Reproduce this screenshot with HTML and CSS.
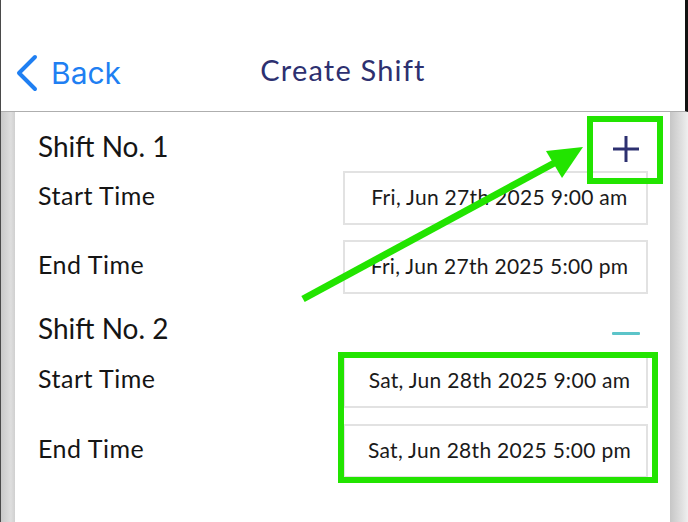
FILE: index.html
```html
<!DOCTYPE html>
<html lang="en">
<head>
    <meta charset="UTF-8">
    <meta name="viewport" content="width=device-width, initial-scale=1.0">
    <title>Create Shift</title>
    <link rel="stylesheet" href="styles.css">
</head>
<body>
    <div class="screen">
        <header class="topbar">
            <a class="back" href="#">
                <svg width="24" height="38" viewBox="0 0 24 38">
                    <polyline points="20,3 4,19 20,35" fill="none" stroke="#1f7ff2" stroke-width="4" stroke-linecap="round" stroke-linejoin="round"/>
                </svg>
                <span>Back</span>
            </a>
            <h1>Create Shift</h1>
            <span></span>
        </header>

        <div class="body">
            <div class="rail rail-left"></div>
            <main class="content">
                <section class="shift">
                    <div class="shift-head">
                        <h2>Shift No. 1</h2>
                        <span class="icon-add">
                            <svg width="28" height="28" viewBox="0 0 28 28">
                                <line x1="14" y1="1" x2="14" y2="27" stroke="#2d3070" stroke-width="3"/>
                                <line x1="1" y1="14" x2="27" y2="14" stroke="#2d3070" stroke-width="3"/>
                            </svg>
                        </span>
                    </div>
                    <div class="row">
                        <span class="label">Start Time</span>
                        <div class="picker">Fri, Jun 27th 2025 9:00 am</div>
                    </div>
                    <div class="row">
                        <span class="label">End Time</span>
                        <div class="picker">Fri, Jun 27th 2025 5:00 pm</div>
                    </div>
                </section>

                <section class="shift">
                    <div class="shift-head">
                        <h2>Shift No. 2</h2>
                        <span class="icon-remove"></span>
                    </div>
                    <div class="row">
                        <span class="label">Start Time</span>
                        <div class="picker">Sat, Jun 28th 2025 9:00 am</div>
                    </div>
                    <div class="row">
                        <span class="label">End Time</span>
                        <div class="picker">Sat, Jun 28th 2025 5:00 pm</div>
                    </div>
                </section>
            </main>
            <div class="rail rail-right"></div>
        </div>

        <!-- annotation overlay -->
        <svg class="marks" width="688" height="522" viewBox="0 0 688 522">
            <rect x="590" y="119" width="70" height="62" fill="none" stroke="#22e400" stroke-width="6"/>
            <rect x="341" y="355" width="314" height="125" fill="none" stroke="#22e400" stroke-width="6"/>
            <line x1="303" y1="299" x2="558" y2="161" stroke="#22e400" stroke-width="7"/>
            <polygon points="583,147 546,151 562,178" fill="#22e400"/>
        </svg>
    </div>
</body>
</html>
```

FILE: styles.css
```css
body {
    margin: 0;
    background: #ffffff;
    font-family: Lato, "Open Sans", sans-serif;
    color: #151515;
}
.screen {
    position: relative;
    width: 688px;
    height: 522px;
    overflow: hidden;
    display: flex;
    flex-direction: column;
    border-left: 1px solid #4a4a4a;
    box-sizing: border-box;
}
.topbar {
    height: 112px;
    box-sizing: border-box;
    padding-top: 34px;
    display: grid;
    grid-template-columns: 1fr auto 1fr;
    align-items: center;
    border-bottom: 1px solid #aeaeae;
    border-right: 3px solid #111;
}
.back {
    display: flex;
    align-items: center;
    gap: 12px;
    padding-left: 14px;
    color: #1f7ff2;
    text-decoration: none;
    font-family: Inter, "Liberation Sans", sans-serif;
    font-size: 30px;
}
.topbar h1 {
    margin: 0 0 6px;
    font-size: 29px;
    font-weight: 400;
    letter-spacing: 1.2px;
    color: #2d3070;
}
.body {
    flex: 1;
    display: flex;
}
.rail {
    flex: none;
}
.rail-left {
    width: 14px;
    background: linear-gradient(to right, #c9c9c9, #dedede 70%, #d0d0d0);
}
.rail-right {
    width: 18px;
    background: linear-gradient(to right, #c6c6c6, #e2e2e2 70%, #efefef);
}
.content {
    flex: 1;
    padding: 0 22px 0 23px;
}
.shift-head {
    height: 59px;
    box-sizing: border-box;
    padding-top: 8px;
    display: flex;
    align-items: center;
    justify-content: space-between;
}
.shift + .shift .shift-head {
    height: 60px;
}
.shift-head h2 {
    margin: 0;
    font-size: 28px;
    font-weight: 400;
}
.icon-add {
    display: flex;
    margin: 6px 8px 0 0;
}
.icon-remove {
    width: 28px;
    height: 3px;
    margin: 10px 8px 0 0;
    background: #5cc4c9;
    border-radius: 1px;
}
.row {
    height: 54px;
    display: flex;
    align-items: center;
    justify-content: space-between;
}
.row + .row {
    margin-top: 15px;
}
.shift + .shift .row + .row {
    margin-top: 16px;
}
.label {
    font-size: 25px;
    letter-spacing: 0.5px;
    padding-bottom: 6px;
}
.picker {
    width: 305px;
    height: 54px;
    box-sizing: border-box;
    border: 2px solid #e2e2e2;
    padding: 0 0 4px 8px;
    display: flex;
    align-items: center;
    justify-content: center;
    font-size: 21px;
    letter-spacing: 0.3px;
    color: #1a1a1a;
}
.marks {
    position: absolute;
    left: -1px;
    top: 0;
    pointer-events: none;
}
```
